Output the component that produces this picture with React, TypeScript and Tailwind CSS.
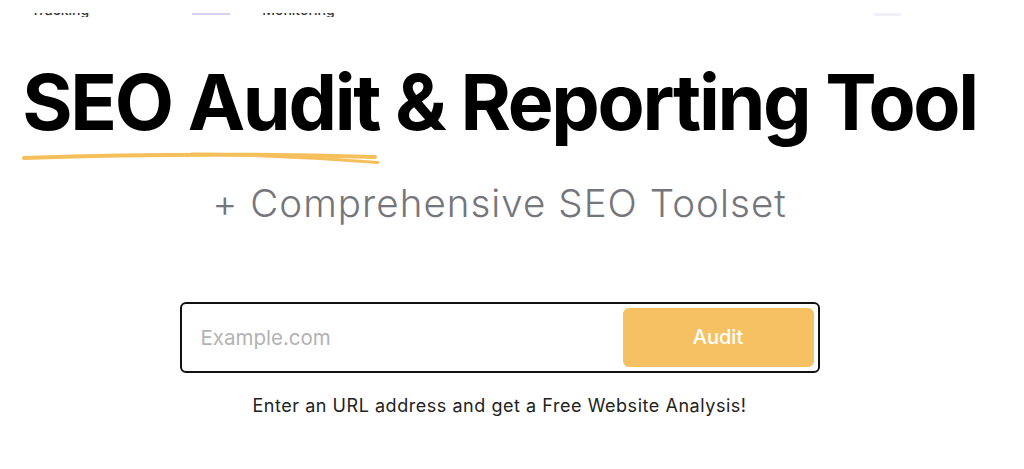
import React from "react";

export default function App() {
  return (
    <div className="w-[1024px] h-[469px] overflow-hidden bg-white font-['Inter',sans-serif] text-black">
      <div className="h-[17px] pt-[13px]">
        <div className="relative h-[4px] overflow-hidden">
          <div className="-mt-[13px] flex items-start text-[14px] leading-[20px] text-[#333] font-medium">
            <span className="ml-[31px]">Tracking</span>
            <span className="ml-[103px] mt-[13px] w-[38px] h-[2px] bg-[#dccdf3]" />
            <span className="ml-[32px]">Monitoring</span>
            <span className="ml-[539px] mt-[13px] w-[27px] h-[3px] bg-[#f0f0f7]" />
          </div>
        </div>
      </div>

      <div className="w-[999px] flex flex-col items-center">
        <h1 className="mt-[47px] text-[77px] leading-none font-bold tracking-[-0.03em] whitespace-nowrap">
          SEO Audit &amp; Reporting Tool
        </h1>
        <svg
          className="self-start ml-[22px] mt-[9px]"
          width="360"
          height="18"
          viewBox="0 0 360 18"
          fill="none"
        >
          <path
            d="M2 8 C 90 5, 200 2.5, 353 7"
            stroke="#f5bf5c"
            strokeWidth="4"
            strokeLinecap="round"
          />
          <path
            d="M170 4 C 250 5, 305 8.5, 356 12.5"
            stroke="#f5bf5c"
            strokeWidth="3"
            strokeLinecap="round"
          />
        </svg>
        <p className="mt-[16px] text-[38.5px] leading-none font-light tracking-[0.027em] text-[#75757c] whitespace-nowrap">
          + Comprehensive SEO Toolset
        </p>

        <div className="mt-[79px] w-[640px] h-[71px] border-2 border-[#111] rounded-[6px] flex items-center pl-[19px] pr-[4px] py-[4px]">
          <input
            className="flex-1 h-full outline-none text-[20.5px] text-[#333] placeholder:text-[#b3b3b3] bg-transparent"
            placeholder="Example.com"
          />
          <button className="w-[191px] h-full rounded-[6px] bg-[#f5c163] text-white text-[20px] font-medium">
            Audit
          </button>
        </div>

        <p className="mt-[19px] text-[18px] tracking-[0.03em] text-[#222] whitespace-nowrap">
          Enter an URL address and get a Free Website Analysis!
        </p>
      </div>
    </div>
  );
}
